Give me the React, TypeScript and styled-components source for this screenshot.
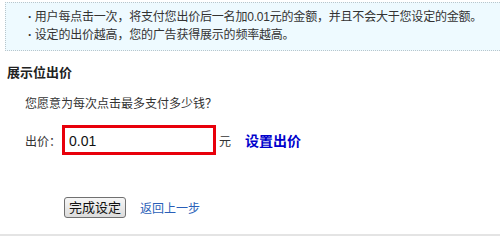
import React from "react";
import styled, { createGlobalStyle } from "styled-components";

const Global = createGlobalStyle`
  html, body { margin: 0; padding: 0; background: #fff; }
  body {
    width: 500px; height: 236px; overflow: hidden;
    font-family: "Liberation Sans", Arial, "Noto Sans CJK SC", sans-serif;
    font-size: 12px; color: #333;
  }
`;

const Page = styled.div`
  width: 500px;
  height: 236px;
  box-sizing: border-box;
  padding-top: 2px;
  border-bottom: 2px solid #e4e4e4;
  display: flex;
  flex-direction: column;
`;

const Notice = styled.ul`
  margin: 0 0 0 5px;
  padding: 5px 0 6px 22px;
  list-style: none;
  background: #eefaff;
  border-top: 1px dotted #b9c6cc;
  border-bottom: 1px dotted #b9c6cc;
  border-left: 1px dotted #b9c6cc;
  display: flex;
  flex-direction: column;
`;

const NoticeItem = styled.li`
  line-height: 18px;
  color: #333;
  letter-spacing: -0.2px;
  &::before { content: "·"; margin-right: 3px; font-weight: bold; }
`;

const Heading = styled.h3`
  margin: 13px 0 0 7px;
  font-size: 13px;
  font-weight: bold;
  color: #222;
  line-height: 18px;
`;

const Body = styled.div`
  padding-left: 25px;
  display: flex;
  flex-direction: column;
`;

const Question = styled.p`
  margin: 13px 0 0;
  line-height: 18px;
  font-size: 12px;
  color: #333;
`;

const BidRow = styled.div`
  margin-top: 12px;
  display: flex;
  align-items: center;
`;

const Label = styled.span`
  color: #333;
  width: 37px;
`;

const BidInput = styled.input`
  box-sizing: border-box;
  width: 154px;
  height: 30px;
  border: 3px solid #e8000b;
  padding: 2px 4px 0;
  font-family: "Liberation Sans", Arial, sans-serif;
  font-size: 14px;
  color: #111;
  outline: none;
  background: #fff;
`;

const Unit = styled.span`
  margin-left: 3px;
  color: #333;
`;

const SetLink = styled.a`
  margin-left: 14px;
  font-size: 14px;
  font-weight: bold;
  color: #0000cc;
  text-decoration: none;
`;

const Actions = styled.div`
  margin-top: 42px;
  padding-left: 64px;
  display: flex;
  align-items: center;
  gap: 14px;
`;

const Button = styled.button`
  height: 21px;
  padding: 0 4px;
  font-family: "Liberation Sans", Arial, "Noto Sans CJK SC", sans-serif;
  font-size: 13px;
  color: #111;
  border: 1px solid #707070;
  border-radius: 3px;
  background: linear-gradient(#f6f6f6, #dcdcdc);
  line-height: 17px;
`;

const BackLink = styled.a`
  color: #2a5fb8;
  text-decoration: none;
  font-size: 12px;
`;

export default function App() {
  return (
    <>
      <Global />
      <Page>
        <Notice>
          <NoticeItem>用户每点击一次，将支付您出价后一名加0.01元的金额，并且不会大于您设定的金额。</NoticeItem>
          <NoticeItem>设定的出价越高，您的广告获得展示的频率越高。</NoticeItem>
        </Notice>
        <Heading>展示位出价</Heading>
        <Body>
          <Question>您愿意为每次点击最多支付多少钱？</Question>
          <BidRow>
            <Label>出价：</Label>
            <BidInput defaultValue="0.01" />
            <Unit>元</Unit>
            <SetLink href="#">设置出价</SetLink>
          </BidRow>
        </Body>
        <Actions>
          <Button>完成设定</Button>
          <BackLink href="#">返回上一步</BackLink>
        </Actions>
      </Page>
    </>
  );
}
